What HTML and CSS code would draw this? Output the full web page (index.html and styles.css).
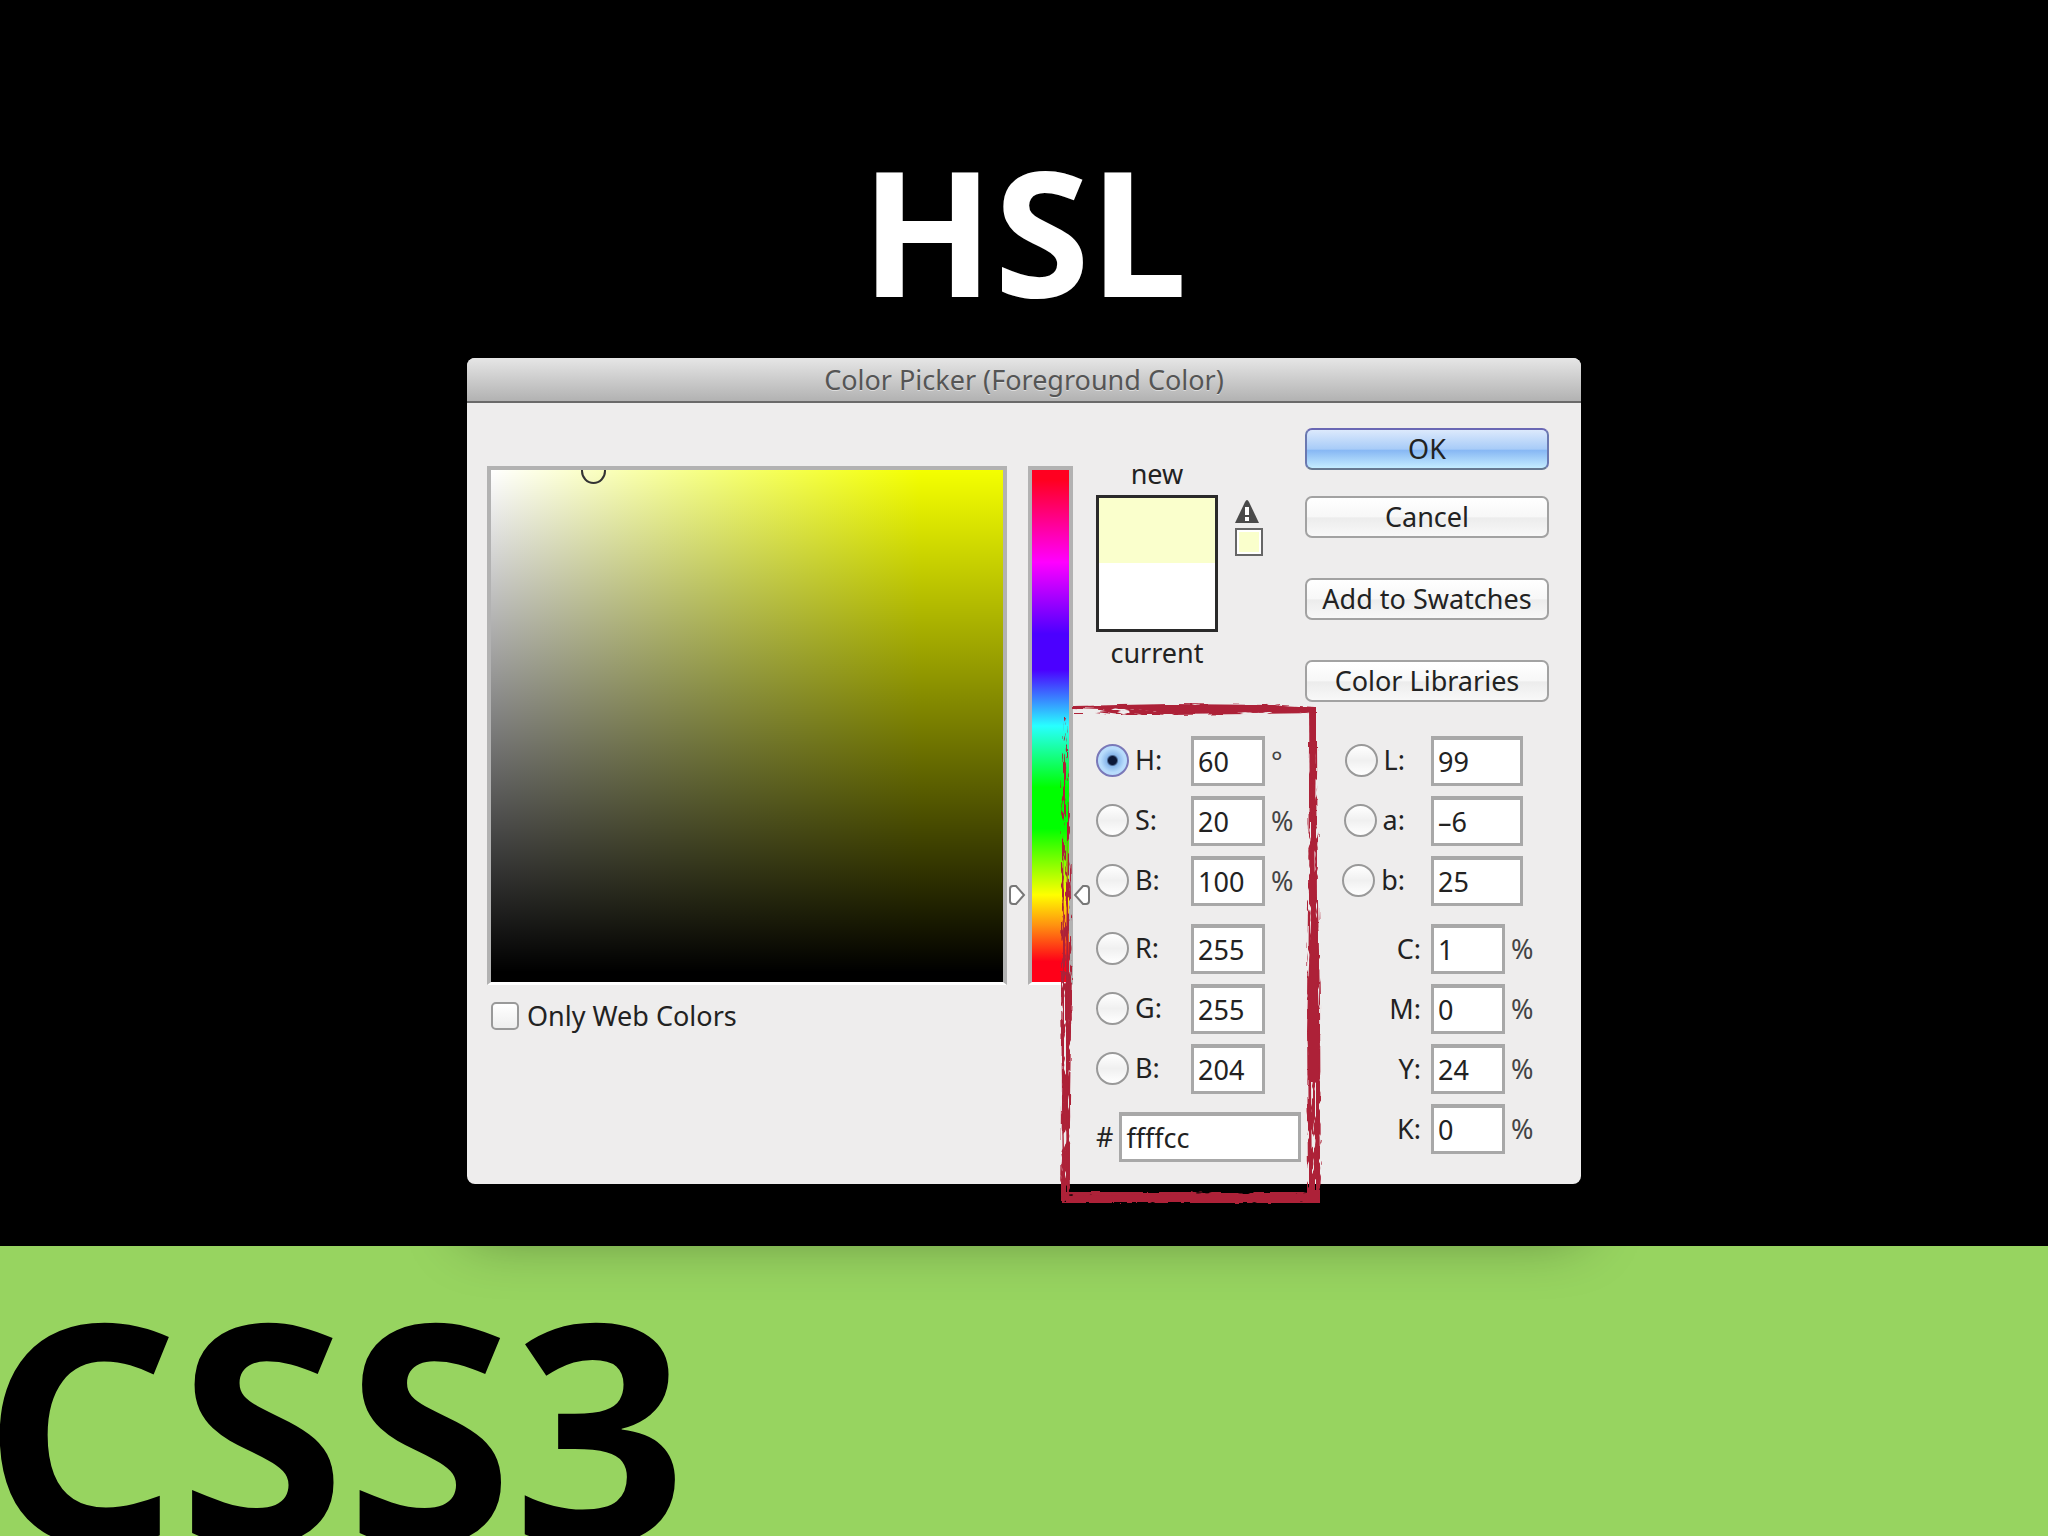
FILE: index.html
```
<!DOCTYPE html>
<html lang="en">
<head>
  <meta charset="UTF-8" />
  <title>CSS3 - HSL</title>
  <link rel="stylesheet" href="styles.css">
</head>
<body>

  <main class="slide">
    <h1 class="titulo">HSL</h1>

    <section class="picker">
      <h2 class="picker-title">Color Picker (Foreground Color)</h2>

      <form class="picker-body">
        <div class="left">
          <div class="areas">
            <div class="field"><span class="cursor"></span></div>
            <div class="hue">
              <svg class="arrow arrow-left" viewBox="0 0 18 20"><path d="M2 4Q2 1 5 1H8L16 10L8 19H5Q2 19 2 16Z" /></svg>
              <svg class="arrow arrow-right" viewBox="0 0 18 20"><path d="M16 4Q16 1 13 1H10L2 10L10 19H13Q16 19 16 16Z" /></svg>
            </div>
          </div>
          <label class="web"><input type="checkbox" class="check" />Only Web Colors</label>
        </div>

        <div class="right">
          <div class="top">
            <div class="preview">
              <span>new</span>
              <div class="swatch"></div>
              <span>current</span>
            </div>
            <div class="gamut">
              <svg class="warning" viewBox="0 0 24 23">
                <path d="M12 0Q13 0 14 2L24 23H0L10 2Q11 0 12 0Z" fill="#4a4a4a" />
                <path d="M10 7H14V15H10ZM10 17H14V21H10Z" fill="#fff" />
              </svg>
              <div class="gamut-color"></div>
            </div>
            <div class="buttons">
              <button type="button" class="btn btn-ok">OK</button>
              <button type="button" class="btn btn-cancel">Cancel</button>
              <button type="button" class="btn">Add to Swatches</button>
              <button type="button" class="btn">Color Libraries</button>
            </div>
          </div>

          <div class="values">
            <div class="col hsb">
              <div class="row"><label class="name"><input type="radio" name="mode" class="radio" checked />H:</label><input type="text" class="num" value="60" aria-label="Hue" /><span class="unit">°</span></div>
              <div class="row"><label class="name"><input type="radio" name="mode" class="radio" />S:</label><input type="text" class="num" value="20" aria-label="Saturation" /><span class="unit">%</span></div>
              <div class="row"><label class="name"><input type="radio" name="mode" class="radio" />B:</label><input type="text" class="num" value="100" aria-label="Brightness" /><span class="unit">%</span></div>
              <div class="row group"><label class="name"><input type="radio" name="mode" class="radio" />R:</label><input type="text" class="num" value="255" aria-label="Red" /></div>
              <div class="row"><label class="name"><input type="radio" name="mode" class="radio" />G:</label><input type="text" class="num" value="255" aria-label="Green" /></div>
              <div class="row"><label class="name"><input type="radio" name="mode" class="radio" />B:</label><input type="text" class="num" value="204" aria-label="Blue" /></div>
              <div class="row group hex"><label for="hex">#</label><input type="text" id="hex" class="num" value="ffffcc" /></div>
            </div>

            <div class="col lab">
              <div class="row"><label class="name"><input type="radio" name="mode" class="radio" />L:</label><input type="text" class="num wide" value="99" aria-label="Lightness" /></div>
              <div class="row"><label class="name"><input type="radio" name="mode" class="radio" />a:</label><input type="text" class="num wide" value="–6" aria-label="a" /></div>
              <div class="row"><label class="name"><input type="radio" name="mode" class="radio" />b:</label><input type="text" class="num wide" value="25" aria-label="b" /></div>
              <div class="row group"><label class="ink" for="c">C:</label><input type="text" id="c" class="num" value="1" /><span class="unit">%</span></div>
              <div class="row"><label class="ink" for="m">M:</label><input type="text" id="m" class="num" value="0" /><span class="unit">%</span></div>
              <div class="row"><label class="ink" for="y">Y:</label><input type="text" id="y" class="num" value="24" /><span class="unit">%</span></div>
              <div class="row"><label class="ink" for="k">K:</label><input type="text" id="k" class="num" value="0" /><span class="unit">%</span></div>
            </div>

            <!-- red brush mark -->
            <svg class="mark" viewBox="0 0 262 502">
              <defs>
                <filter id="brushV" filterUnits="userSpaceOnUse" x="-5" y="0" width="272" height="502">
                  <feTurbulence type="fractalNoise" baseFrequency="0.3 0.04" numOctaves="3" seed="4" result="n" />
                  <feColorMatrix in="n" type="matrix" values="0 0 0 0 0  0 0 0 0 0  0 0 0 0 0  0 0 0 -16 10" result="holes" />
                  <feDisplacementMap in="SourceGraphic" in2="n" scale="5" xChannelSelector="R" yChannelSelector="G" result="d" />
                  <feComposite in="d" in2="holes" operator="in" />
                </filter>
                <filter id="brushSparse" filterUnits="userSpaceOnUse" x="-5" y="0" width="272" height="502">
                  <feTurbulence type="fractalNoise" baseFrequency="0.5 0.05" numOctaves="3" seed="9" result="n" />
                  <feColorMatrix in="n" type="matrix" values="0 0 0 0 0  0 0 0 0 0  0 0 0 0 0  0 0 0 -16 8" result="holes" />
                  <feDisplacementMap in="SourceGraphic" in2="n" scale="5" xChannelSelector="R" yChannelSelector="G" result="d" />
                  <feComposite in="d" in2="holes" operator="in" />
                </filter>
                <filter id="brushH" filterUnits="userSpaceOnUse" x="-5" y="-5" width="272" height="512">
                  <feTurbulence type="fractalNoise" baseFrequency="0.04 0.3" numOctaves="3" seed="7" result="n" />
                  <feColorMatrix in="n" type="matrix" values="0 0 0 0 0  0 0 0 0 0  0 0 0 0 0  0 0 0 -16 11" result="holes" />
                  <feDisplacementMap in="SourceGraphic" in2="n" scale="4" xChannelSelector="R" yChannelSelector="G" result="d" />
                  <feComposite in="d" in2="holes" operator="in" />
                </filter>
              </defs>
              <g fill="#ad2138">
                <g filter="url(#brushH)">
                  <path d="M13 4L60 3L110 2L220 3L256 5V11L190 12L110 13L60 11L40 7L13 6Z" />
                  <path d="M35 10L60 8L100 10V13L60 13Z" />
                  <path d="M12 11H24V12H12Z" />
                  <path d="M2 490H260V501H2Z" />
                </g>
                <path d="M60 5L110 3L215 3L236 6H256V10L190 10L130 11L90 9Z" />
                <path d="M6 494L60 493L120 492H256V499H160L120 500H6Z" />
                <path d="M249 5L256 5V40L255 120L250 120Z" />
                <g filter="url(#brushV)">
                  <path d="M249 40L257 40L258 200L260 300L261 500H248L247 300L248 200Z" />
                  <path d="M1 270L12 270L11 330L10 400L11 498H1L2 400Z" />
                </g>
                <path d="M251 120L254 120L255 190L257 260L260 345L258 380L250 380L247 330L248 285L251 220Z" />
                <path d="M249 380H251L252 490H249ZM256 380H258L259 490H256Z" />
                <path d="M248 488H260V501H248Z" />
                <g filter="url(#brushSparse)">
                  <path d="M4 16L6 16L9 120L12 330H1L1 90L3 60Z" />
                  <path d="M1 110H10L12 300H1Z" />
                </g>
                <path d="M3 130L4 240L4 330L3 400L5 498H3L2 400L3 330Z" />
                <path d="M7 120L8 200L9 330L8 400L9 498H7L6 400L6 330Z" />
              </g>
            </svg>
          </div>
        </div>
      </form>
    </section>
  </main>

  <footer class="franja">CSS3</footer>

</body>
</html>
```
FILE: styles.css
```
* { box-sizing: border-box; margin: 0; padding: 0; }

body {
  display: flex;
  flex-direction: column;
  min-height: 100vh;
  background: #000;
  font-family: "Noto Sans", "Open Sans", sans-serif;
  overflow: hidden;
}

.slide {
  position: relative;
  z-index: 1;
  flex: 1;
  display: flex;
  flex-direction: column;
  align-items: center;
  padding-top: 130px;
}

.titulo {
  color: #fff;
  font-size: 174px;
  line-height: 200px;
  font-weight: bold;
  margin-bottom: 28px;
}

.franja {
  height: 290px;
  overflow: hidden;
  background: #97d460;
  color: #000;
  font-size: 304px;
  line-height: 358px;
  font-weight: bold;
  text-indent: -17px;
  white-space: nowrap;
}

/* dialog */
.picker {
  width: 90%;
  max-width: 1114px;
  border-radius: 8px;
  background: #eeeded;
  color: #222;
  font-size: 27px;
  line-height: 32px;
  box-shadow: 0 50px 60px rgba(0, 0, 0, 0.4);
}

.picker-title {
  height: 45px;
  line-height: 44px;
  border-radius: 8px 8px 0 0;
  border-bottom: 2px solid #6a6a6a;
  background: linear-gradient(#e6e6e6, #b2b2b2);
  color: #555;
  font-size: 27px;
  font-weight: normal;
  text-align: center;
  text-shadow: 0 1px 0 #ddd;
}

.picker-body {
  display: flex;
  gap: 23px;
  padding: 25px 32px 22px 20px;
}

.left {
  flex: 1;
  padding-top: 38px;
}

.areas {
  display: flex;
  gap: 21px;
}

.field, .hue {
  height: 519px;
  border: 4px solid #b2b2b2;
  border-bottom: 3px solid #fff;
}

.field {
  flex: 1;
  position: relative;
  overflow: hidden;
  background:
    linear-gradient(rgba(0, 0, 0, 0), #000 98%),
    linear-gradient(to right, #fff, #f6ff80 42%, #f4ff00 84%);
}

.cursor {
  position: absolute;
  top: -12px;
  left: 90px;
  width: 25px;
  height: 26px;
  border: 2px solid #333;
  border-radius: 50%;
}

.hue {
  position: relative;
  width: 45px;
  background: linear-gradient(#ff0020 2%, #ff00ff 18%, #4b00ff 32%, #4b00ff 39%, #28ffff 50%, #00ff00 62%, #00ff00 70%, #ffff00 83%, #ff9010 89%, #ff0018 96%);
}

.arrow {
  position: absolute;
  top: 415px;
  width: 18px;
  height: 20px;
  fill: #fff;
  stroke: #777;
  stroke-width: 2;
}

.arrow-left { left: -24px; }
.arrow-right { right: -22px; }

.web {
  display: flex;
  align-items: center;
  gap: 8px;
  margin: 15px 0 0 4px;
}

.check {
  appearance: none;
  width: 28px;
  height: 28px;
  border: 2px solid #999;
  border-radius: 5px;
  background: linear-gradient(#fff, #eee);
}

.right { width: 453px; }

.top { display: flex; }

.preview {
  display: flex;
  flex-direction: column;
  align-items: center;
  width: 122px;
  padding-top: 30px;
}

.swatch {
  width: 122px;
  height: 137px;
  margin: 5px 0;
  border: 3px solid #2a2a2a;
  background: linear-gradient(#faffcc 50%, #fff 50%);
}

.gamut { padding: 72px 0 0 17px; }

.warning {
  display: block;
  width: 24px;
  height: 23px;
}

.gamut-color {
  width: 28px;
  height: 28px;
  margin-top: 5px;
  border: 2px solid #666;
  background: #faffcc;
  box-shadow: inset 0 0 0 2px #fff;
}

.buttons {
  display: flex;
  flex-direction: column;
  gap: 40px;
  width: 244px;
  margin-left: auto;
}

.btn {
  height: 42px;
  border: 2px solid #a2a2a2;
  border-radius: 7px;
  background: linear-gradient(#fff, #f7f7f7 50%, #ececec 52%, #f8f8f8);
  color: #222;
  font-family: inherit;
  font-size: 27px;
  line-height: 36px;
}

.btn-ok {
  border-color: #6a68b4 #6a78b0 #667890;
  background: linear-gradient(#dce9fc, #a8ccf8 50%, #88b8f4 54%, #c4ecff);
}

.btn-cancel { margin-top: -14px; }

.values {
  position: relative;
  display: flex;
  justify-content: space-between;
  margin-top: 34px;
}

.col {
  display: flex;
  flex-direction: column;
  gap: 10px;
}

.hsb { width: 205px; }
.lab { width: 210px; }

.row {
  display: flex;
  align-items: center;
  gap: 6px;
}

.group { margin-top: 8px; }

.name {
  display: flex;
  align-items: center;
  gap: 6px;
  width: 89px;
  padding-bottom: 2px;
}

.lab .name {
  justify-content: flex-end;
  width: 66px;
  margin-right: 20px;
}

.ink {
  width: 82px;
  text-align: right;
  margin-right: 4px;
}

.hex .num { flex: 1; }

.radio {
  appearance: none;
  flex: none;
  width: 33px;
  height: 33px;
  border: 2px solid #999;
  border-radius: 50%;
  background: linear-gradient(#fff, #f0f0f0 50%, #fff);
}

.radio:checked {
  border-color: #7a78b8;
  background: radial-gradient(circle, #0c1838 4px, #8ab8ec 6px, #b8dcfc 12px);
}

.num {
  width: 74px;
  min-width: 0;
  height: 50px;
  padding: 0 0 0 4px;
  border: 3px solid #a8a8a8;
  border-top-width: 4px;
  background: #fff;
  color: #222;
  font-family: inherit;
  font-size: 27px;
}

.wide { width: 92px; }

.unit { color: #444; }

.mark {
  position: absolute;
  left: -36px;
  top: -34px;
  width: 262px;
  height: 502px;
  pointer-events: none;
}
```
